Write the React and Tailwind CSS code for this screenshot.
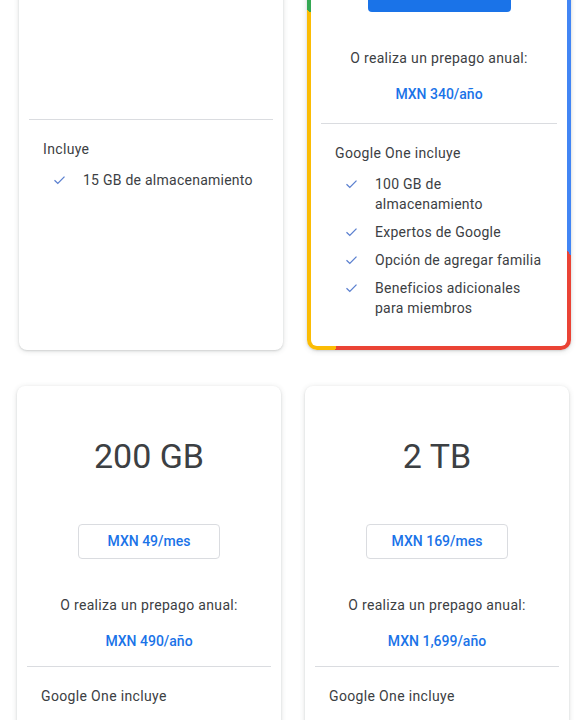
import React from "react";

const FONT = { fontFamily: "Roboto, 'Liberation Sans', sans-serif" };

function Check() {
  return (
    <svg width="13" height="10" viewBox="0 0 13 10" className="shrink-0 mt-[5px]">
      <path d="M1.5 5.2 L4.8 8.4 L11.5 1.6" fill="none" stroke="#5a7fcf" strokeWidth="1.3" />
    </svg>
  );
}

function Features({ title, items }) {
  return (
    <div className="px-[24px] pb-[28px]">
      <div className="mt-[19px] text-[14px] leading-[20px] tracking-[0.35px] text-[#3c4043]">{title}</div>
      <ul className="mt-[11px] flex flex-col gap-[8px]">
        {items.map((it) => (
          <li key={it} className="flex pl-[10px] text-[14px] leading-[20px] tracking-[0.25px] text-[#3c4043]">
            <span className="w-[30px] shrink-0">
              <Check />
            </span>
            <span>{it}</span>
          </li>
        ))}
      </ul>
    </div>
  );
}

function PlanTop({ size, monthly, yearly, primary, dividerGap }) {
  return (
    <>
      <div className="pt-[50px] text-center text-[34px] leading-[40px] text-[#3c4043]">{size}</div>
      <div className="mt-[48px] flex justify-center">
        {primary ? (
          <button className="h-[35px] w-[143px] rounded-[4px] bg-[#1a73e8] text-[14px] font-medium text-white">
            {monthly}
          </button>
        ) : (
          <button className="h-[35px] w-[142px] rounded-[4px] border border-[#dadce0] bg-white text-[14px] font-medium text-[#1a73e8]">
            {monthly}
          </button>
        )}
      </div>
      <div className="mt-[36px] text-center text-[14px] leading-[20px] tracking-[0.33px] text-[#3c4043]">
        O realiza un prepago anual:
      </div>
      <div className="mt-[16px] text-center text-[14px] font-medium leading-[20px] text-[#1a73e8]">
        {yearly}
      </div>
      <div className={`mx-[10px] h-px bg-[#dadce0] ${dividerGap}`} />
    </>
  );
}

const CARD =
  "rounded-[8px] bg-white shadow-[0_1px_2px_0_rgba(60,64,67,0.18),0_1px_5px_1px_rgba(60,64,67,0.1)]";

export default function App() {
  return (
    <div className="min-h-screen overflow-hidden bg-white" style={FONT}>
      {/* top row, scrolled partly out of view */}
      <div className="-mt-[165px] grid grid-cols-[264px_264px] gap-x-[24px] pl-[19px]">
        <div className={`${CARD} flex flex-col`}>
          <div className="pt-[50px] text-center text-[34px] leading-[40px] text-[#3c4043]">15 GB</div>
          <div className="mt-[48px] text-center text-[14px] leading-[20px] text-[#5f6368]">Tu plan actual</div>
          <div className="mx-[10px] mt-[126px] h-px bg-[#dadce0]" />
          <Features title="Incluye" items={["15 GB de almacenamiento"]} />
        </div>

        <div className="rounded-[10px] bg-[image:conic-gradient(#4285f4_0deg_141deg,#ea4335_141deg_202deg,#fbbc04_202deg_302deg,#34a853_302deg_360deg)] p-[4px] shadow-[0_1px_2px_0_rgba(60,64,67,0.18),0_1px_5px_1px_rgba(60,64,67,0.1)]">
          <div className="h-full rounded-[6px] bg-white">
            <PlanTop size="100 GB" monthly="MXN 35/mes" yearly="MXN 340/año" primary dividerGap="mt-[19px]" />
            <Features
              title="Google One incluye"
              items={[
                "100 GB de almacenamiento",
                "Expertos de Google",
                "Opción de agregar familia",
                "Beneficios adicionales para miembros",
              ]}
            />
          </div>
        </div>
      </div>

      {/* second row */}
      <div className="mt-[36px] grid grid-cols-[264px_264px] gap-x-[24px] pl-[17px]">
        <div className={CARD}>
          <PlanTop size="200 GB" monthly="MXN 49/mes" yearly="MXN 490/año" dividerGap="mt-[15px]" />
          <Features
            title="Google One incluye"
            items={[
              "200 GB de almacenamiento",
              "Expertos de Google",
              "Opción de agregar familia",
              "Beneficios adicionales para miembros",
            ]}
          />
        </div>
        <div className={CARD}>
          <PlanTop size="2 TB" monthly="MXN 169/mes" yearly="MXN 1,699/año" dividerGap="mt-[15px]" />
          <Features
            title="Google One incluye"
            items={[
              "2 TB de almacenamiento",
              "Expertos de Google",
              "Opción de agregar familia",
              "Beneficios adicionales para miembros",
            ]}
          />
        </div>
      </div>
    </div>
  );
}
